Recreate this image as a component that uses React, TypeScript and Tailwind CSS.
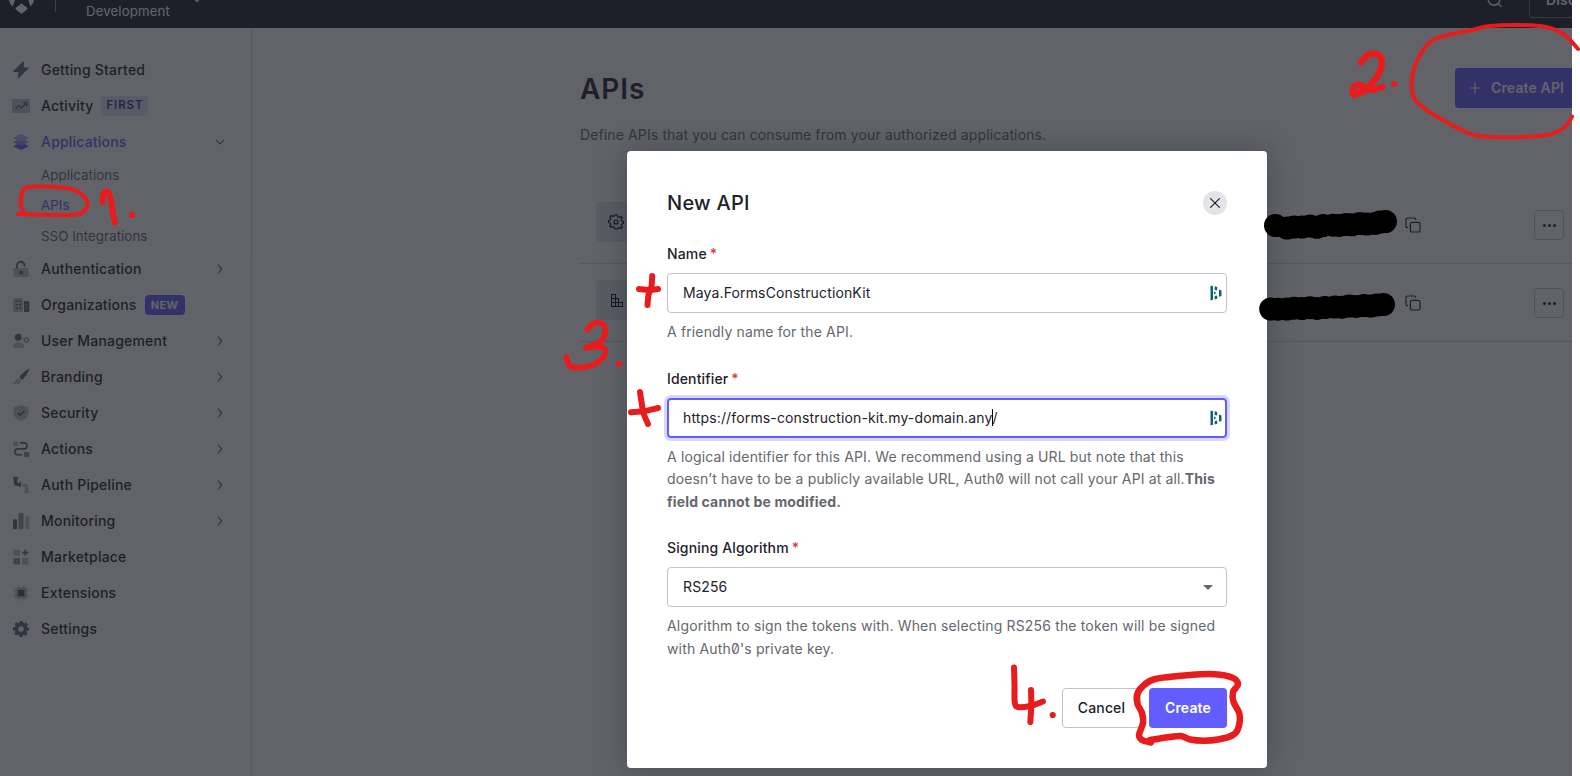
import React from 'react';

type Pt = [number, number];

/** Smooth Catmull-Rom path through a list of points. */
function smooth(pts: Pt[]): string {
  let d = `M${pts[0][0]} ${pts[0][1]}`;
  for (let i = 0; i < pts.length - 1; i++) {
    const a = pts[i - 1] ?? pts[i];
    const b = pts[i];
    const c = pts[i + 1];
    const e = pts[i + 2] ?? c;
    d += ` C${b[0] + (c[0] - a[0]) / 6} ${b[1] + (c[1] - a[1]) / 6} ${c[0] - (e[0] - b[0]) / 6} ${c[1] - (e[1] - b[1]) / 6} ${c[0]} ${c[1]}`;
  }
  return d;
}

const D = '#5f6577';
const M = '#8f939e';
const L = '#c0c2c8';

const icons: Record<string, React.ReactNode> = {
  bolt: <path d="M9.300 .300.600 8.700c-.7.700-.4 1.400.5 1.400h4.500L4.700 15c-.2 1 .5 1.400 1.200.7l9.400-9c.6-.6.300-1.200-.5-1.200h-4.200L11.200 1C11.300-.100 10.300-.600 9.300.300Z" fill={D} />,
  activity: (
    <>
      <rect x="-1" y="1" width="18" height="14" rx="1.600" fill={L} />
      <path d="m2.500 11 3.500-3.400 2.600 2.200L13.400 5M9.800 4.700h3.900v3.900" fill="none" stroke={D} strokeWidth="1.300" />
    </>
  ),
  layers: (
    <>
      <path d="M8 8.600 0 12.200l6.800 3.400q1.200.6 2.400 0L16 12.200Z" fill="#635dff" />
      <path d="M8 4.400 0 8l6.800 3.600q1.200.6 2.400 0L16 8Z" fill="#8f8bff" />
      <path d="M6.800.2q1.200-.5 2.400 0L16 3.900 9.200 7.300q-1.200.6-2.400 0L0 3.900Z" fill="#b5b2f5" />
    </>
  ),
  lock: (
    <>
      <path d="M4 8V4.600a3.800 3.800 0 0 1 7.600 0V5.600" fill="none" stroke={D} strokeWidth="1.900" />
      <rect x=".6" y="7" width="15" height="9" rx="1.600" fill={L} />
      <circle cx="8" cy="11.600" r="2" fill={D} />
    </>
  ),
  org: (
    <>
      <rect x="0" y="1" width="10" height="14" rx="1.500" fill={L} />
      <path d="M2.500 4.300h2M6 4.300h2M2.500 7.800h2M6 7.800h2M2.500 11.300h2M6 11.300h2" stroke={D} strokeWidth="1.500" />
      <path d="M11 4h4q1.300 0 1.300 1.300v8.400q0 1.300-1.300 1.300h-4Z" fill={D} />
      <path d="M12.700 7.500h1.500M12.700 11.300h1.500" stroke={L} strokeWidth="1.500" />
    </>
  ),
  user: (
    <>
      <circle cx="5.200" cy="4.200" r="3.500" fill={D} />
      <path d="M0 15v-1.500c0-2.500 1.500-4 3.800-4h3.400c2.300 0 3.800 1.500 3.800 4V15Z" fill={L} />
      <circle cx="13.300" cy="6.800" r="2" fill="none" stroke={M} strokeWidth="1.300" />
      <path d="M13.300 3.700v1M13.300 9v1M10.600 5.300l.8.400M15.200 7.900l.8.400M10.600 8.300l.8-.4M15.200 5.700l.8-.4" stroke={M} strokeWidth="1.200" />
    </>
  ),
  brush: (
    <>
      <path d="M16.400-.2C13 .600 7.500 6.400 6.300 8.600L9 11C11.500 9 15.800 3.200 16.400-.2Z" fill={D} />
      <path d="M5.300 9.400c-3 0-2.500 4-5.300 5.400 1.500 1 7.400 1.800 8.300-2.700Z" fill={L} />
    </>
  ),
  shield: (
    <>
      <path d="M8 0 .6 2.600v5C.6 12 4 15 8 16c4-1 7.400-4 7.400-8.400v-5Z" fill={L} />
      <path d="m4.800 7.800 2.400 2.500 4.400-4.700" fill="none" stroke={D} strokeWidth="1.700" />
    </>
  ),
  actions: (
    <>
      <rect x="0" y=".200" width="5" height="5" rx=".7" fill={L} />
      <rect x="11" y="11" width="5.300" height="5" rx=".7" fill={M} />
      <path d="M7 1.900h4a3 3 0 0 1 0 6H4.700a2.900 2.900 0 0 0 0 5.900H9" fill="none" stroke={D} strokeWidth="1.600" />
    </>
  ),
  pipe: (
    <>
      <path d="M0 0h5v1.600h-.6v3.100c0 .8.4 1.200 1.200 1.200h1V5H8v5H6.600V9H4.500C2 9 .8 7.500.8 5.500V1.600H0Z" fill={D} />
      <path d="M9.300 6.500h2.200c2.800 0 3.700 1.500 3.700 3.700v4.200h1.200V16h-5.200v-1.600h.8v-3.700c0-.8-.4-1.200-1.200-1.200H9.300Z" fill={L} />
    </>
  ),
  bars: (
    <>
      <rect x="0" y="6.200" width="4" height="10" rx="1.200" fill={D} />
      <rect x="5.500" y="0" width="5" height="16.200" rx="1.200" fill={M} />
      <rect x="12.300" y="3" width="4" height="13.200" rx="1.200" fill={L} />
    </>
  ),
  market: (
    <>
      <rect x=".5" y=".800" width="6.500" height="6.200" rx="1.200" fill={L} />
      <rect x=".5" y="9" width="6.500" height="6.500" rx="1.200" fill={M} />
      <rect x="9" y="9" width="6.500" height="6.500" rx="1.200" fill={L} />
      <path d="M12.300.5v6.200M9.200 3.600h6.200" stroke={D} strokeWidth="1.600" />
    </>
  ),
  chip: (
    <>
      <path d="M5.500 0v16M10.700 0v16M0 5.400h16.500M0 10.600h16.500" stroke={L} strokeWidth="1" />
      <rect x="2.200" y="2.200" width="11.800" height="11.600" rx="1.500" fill={L} />
      <rect x="4.800" y="4.700" width="6.600" height="6.600" rx=".6" fill="#4f5068" />
    </>
  ),
  gear: (
    <>
      <circle cx="8" cy="8" r="4.600" fill="none" stroke={D} strokeWidth="3.600" />
      <circle cx="8" cy="8" r="6.800" fill="none" stroke={D} strokeWidth="2.600" strokeDasharray="3.100 2.240" strokeDashoffset="1.550" />
    </>
  ),
};

function Chevron({ down = false }: { down?: boolean }) {
  return (
    <svg viewBox="0 0 10 10" className="h-2.5 w-2.5 shrink-0" fill="none" stroke="#65676e" strokeWidth="1.100" strokeLinecap="round" strokeLinejoin="round">
      <path d={down ? 'M1.200 3.200 5 6.800 8.800 3.200' : 'M3.200 1.200 6.800 5 3.200 8.800'} />
    </svg>
  );
}

type Item = { icon: string; label: string; badge?: 'FIRST' | 'NEW'; arrow?: boolean; active?: boolean };

function NavItem({ icon, label, badge, arrow, active }: Item) {
  return (
    <div className="flex h-9 items-center pr-[26px] pl-[13px]">
      <svg viewBox="0 0 16 16" className="h-4 w-4 shrink-0 overflow-visible">{icons[icon]}</svg>
      <span className={active ? 'ml-3 pb-0.5 font-medium text-[#635dff]' : 'ml-3 pb-0.5 font-medium text-[#1e212a]'}>{label}</span>
      {badge === 'FIRST' && (
        <span className="ml-2 flex h-5 w-[47px] items-center justify-center rounded bg-[#e2e5f4] text-[11.500px] font-semibold tracking-[0.9px] text-[#32348c]">FIRST</span>
      )}
      {badge === 'NEW' && (
        <span className="ml-2 flex h-5 w-10 items-center justify-center rounded bg-[#635dff] text-[11px] font-bold tracking-[0.4px] text-white">NEW</span>
      )}
      {arrow && <span className="ml-auto flex"><Chevron down={active} /></span>}
    </div>
  );
}

const lower: Item[] = [
  { icon: 'lock', label: 'Authentication', arrow: true },
  { icon: 'org', label: 'Organizations', badge: 'NEW' },
  { icon: 'user', label: 'User Management', arrow: true },
  { icon: 'brush', label: 'Branding', arrow: true },
  { icon: 'shield', label: 'Security', arrow: true },
  { icon: 'actions', label: 'Actions', arrow: true },
  { icon: 'pipe', label: 'Auth Pipeline', arrow: true },
  { icon: 'bars', label: 'Monitoring', arrow: true },
  { icon: 'market', label: 'Marketplace' },
  { icon: 'chip', label: 'Extensions' },
  { icon: 'gear', label: 'Settings' },
];

function Header() {
  return (
    <header className="flex h-7 shrink-0 items-start overflow-hidden bg-[#1e212a] text-white">
      <svg viewBox="0 0 26 14" className="ml-[9px] h-[14px] w-[26px] shrink-0">
        <path d="M0 0H6L3.800 6.300C1.500 4.500.4 2.500 0 0ZM19.400 0h5.600c-.4 2.500-1.500 4.500-3.800 6.300ZM12.500 3.600 18.800 8.300c-1.500 2.300-4 4-6.300 5.400C10.200 12.300 7.700 10.600 6.200 8.300Z" fill="white" />
      </svg>
      <div className="ml-5 h-3 w-px shrink-0 bg-[#84868c]" />
      <span className="ml-[30px] text-[13.200px] leading-[22px]">Development</span>
      <svg viewBox="0 0 10 4" className="ml-[22px] h-1 w-2.5" fill="none" stroke="white" strokeWidth="1.300"><path d="M1.500-2 5 1.500 8.500-2" /></svg>
      <svg viewBox="0 0 16 8" className="ml-auto h-2 w-4 shrink-0" fill="none" stroke="white" strokeWidth="1.400"><circle cx="7" cy="-.5" r="5.800" /><path d="m11 3.500 3.400 3.200" /></svg>
      <div className="-mt-5 ml-[26px] h-[38px] w-[43px] shrink-0 overflow-hidden rounded-bl border-b border-l border-[#74767c] pt-[8px] pl-4 text-sm leading-6 font-semibold whitespace-nowrap">
        Disc
      </div>
    </header>
  );
}

function Row({ kind }: { kind: 'system' | 'custom' }) {
  return (
    <div className="flex h-[78px] items-start border-b border-[#d6d7dc] pt-4 pr-2 pl-4">
      <div className="flex h-10 w-10 items-center justify-center rounded bg-[#e3e6ec]">
        {kind === 'system' ? (
          <svg viewBox="0 0 16 16" className="h-4 w-4" fill="none" stroke="#000" strokeWidth="1.150" strokeLinejoin="round">
            <path d="M6.900 1h2.200l.5 1.800 1.400.6 1.700-1 1.500 1.600-1 1.600.6 1.400 1.700.5v2l-1.700.5-.6 1.400 1 1.700-1.500 1.500-1.700-1-1.400.6L9.100 15H6.900l-.5-1.800-1.400-.6-1.700 1-1.500-1.500 1-1.700L2.200 9 .500 8.500v-2L2.200 6l.6-1.400-1-1.600 1.500-1.600 1.700 1 1.400-.6Z" />
            <circle cx="8" cy="8" r="2" />
          </svg>
        ) : (
          <svg viewBox="0 0 13 13" className="h-[13px] w-[13px]" fill="none" stroke="#000" strokeWidth="1" shapeRendering="crispEdges">
            <path d="M1.500 .5H5.500V4.500H8.500V8.500H12.500V12.500H1.500ZM1.500 4.500H5.500V12.500M1.500 8.500H8.500V12.500" />
          </svg>
        )}
      </div>
      <svg viewBox="0 0 16 16" className="mt-[15px] ml-auto h-4 w-4" fill="none" stroke="#1e212a" strokeWidth="1.200">
        <rect x="5.400" y="5.400" width="9.600" height="9.600" rx="1.600" />
        <path d="M3 10.600H2.200Q1 10.600 1 9.400V2.200Q1 1 2.200 1H9.400Q10.600 1 10.600 2.200V3" />
      </svg>
      <div className="mt-2 ml-[113px] flex h-[30px] w-[30px] items-center justify-center gap-0.5 rounded border border-[#c4c6cc]">
        <i className="h-[3px] w-[3px] rounded-full bg-[#1e212a]" />
        <i className="h-[3px] w-[3px] rounded-full bg-[#1e212a]" />
        <i className="h-[3px] w-[3px] rounded-full bg-[#1e212a]" />
      </div>
    </div>
  );
}

function Label({ children }: { children: React.ReactNode }) {
  return (
    <div className="h-[22px] leading-[22px] font-medium text-[#1e212a]">
      {children} <span className="-ml-px text-[#d03c38]">*</span>
    </div>
  );
}

function VaultIcon() {
  return (
    <svg viewBox="0 0 12 16" className="h-4 w-3 shrink-0" fill="#0e6272">
      <path d="M.500 .600 3 1.200V14.800L.500 15.400ZM4.700 1.300 7.200 2V5.400L4.700 5ZM4.700 11 7.200 10.500V13.800L4.700 14.600ZM9 4.600 11.500 5.500V11L9 11.800ZM4 6.800H5.500V9H4Z" />
    </svg>
  );
}

function Modal() {
  return (
    <div className="flex h-[617px] w-[640px] flex-col rounded bg-white px-10 text-[14px] tracking-[0.14px] text-[#65676e] shadow-[0_0_30px_rgba(30,33,42,0.35)]">
      <div className="mt-9 flex h-8 items-center justify-between">
        <h2 className="text-[20px] font-medium tracking-[0.25px] text-[#1e212a]">New API</h2>
        <span className="flex h-6 w-6 items-center justify-center rounded-full bg-[#e3e4e6]">
          <svg viewBox="0 0 10 10" className="h-2.5 w-2.5" stroke="#1e212a" strokeWidth="1.200" strokeLinecap="round"><path d="m.6.600 8.800 8.800M9.400.600.600 9.400" /></svg>
        </span>
      </div>
      <div className="mt-6 pb-2"><Label>Name</Label></div>
      <div className="flex h-10 shrink-0 items-center justify-between rounded border border-[#c2c4c9] pr-1 pl-[15px] text-[#1e212a]">
        <span className="pb-px">Maya.FormsConstructionKit</span><VaultIcon />
      </div>
      <p className="mt-2 leading-[22.500px]">A friendly name for the API.</p>
      <div className="mt-[24.500px] pb-2"><Label>Identifier</Label></div>
      <div className="flex h-10 shrink-0 items-center justify-between rounded border-2 border-[#635dff] pr-[3px] pl-[14px] text-[#1e212a] shadow-[0_0_0_3px_#d8d6ff]">
        <span className="flex items-center pb-px">https://forms-construction-kit.my-domain.any<i className="-mr-px h-[17px] w-px bg-black" />/</span><VaultIcon />
      </div>
      <p className="mt-2 leading-[22.400px] slashed-zero">
        A logical identifier for this API. We recommend using a URL but note that this<br />
        doesn’t have to be a publicly available URL, Auth0 will not call your API at all.<b>This<br />field cannot be modified.</b>
      </p>
      <div className="mt-[23.800px] pb-2"><Label>Signing Algorithm</Label></div>
      <div className="flex h-10 shrink-0 items-center justify-between rounded border border-[#c2c4c9] pr-[13px] pl-[15px] text-[#1e212a]">
        <span className="pb-px">RS256</span>
        <svg viewBox="0 0 10 5" className="h-[5px] w-2.5" fill="#65676e"><path d="M0 0H10L5 5Z" /></svg>
      </div>
      <p className="mt-2 leading-[22.500px] tracking-[0.165px] slashed-zero">
        Algorithm to sign the tokens with. When selecting RS256 the token will be signed<br />with Auth0's private key.
      </p>
      <div className="mt-auto mb-10 flex h-10 shrink-0 justify-end gap-2">
        <button className="w-[79px] rounded border border-[#c2c4c9] pb-0.5 font-medium text-[#1e212a]">Cancel</button>
        <button className="w-[78px] rounded bg-[#635dff] pb-0.5 font-semibold text-white">Create</button>
      </div>
    </div>
  );
}

const redStrokes: { w: number; pts: Pt[] }[] = [
  { w: 4, pts: [[23.5, 211], [20.7, 205], [22.5, 192], [27, 187.200], [45, 186.500], [66, 188], [77, 191], [85, 197.500], [87.500, 205], [83, 212], [72, 215], [50, 215], [17.500, 214]] },
  { w: 6, pts: [[102.5, 202], [103.5, 194], [107.500, 191.500], [111, 200], [113, 214], [115, 222.500]] },
  { w: 6.5, pts: [[1361, 62.500], [1367, 55.500], [1376, 54], [1381.500, 59], [1380.500, 70], [1373, 82], [1364, 91], [1356, 94], [1353.500, 94.500], [1353, 89], [1358, 84.500], [1365, 87.500], [1372, 89.500], [1382.500, 87]] },
  { w: 4, pts: [[1578, 49], [1571, 41], [1561, 32.500], [1546, 27], [1520, 25], [1490, 26], [1472, 30], [1444, 36], [1429, 43], [1416, 63], [1412, 79], [1412.500, 94], [1418, 103], [1436, 116], [1466, 132], [1484, 136.500], [1520, 137], [1546, 135], [1558, 131.500], [1567, 125], [1572, 116.500]] },
  { w: 5.8, pts: [[587.500, 329.500], [592, 324.500], [599, 322.500], [604.500, 327], [604.500, 336], [598, 343], [586, 348]] },
  { w: 5.8, pts: [[586, 348], [597, 346.500], [604.500, 349], [603.500, 357], [594, 364.500], [582, 367.500], [570, 366], [566.500, 357]] },
  { w: 6, pts: [[639, 289], [649, 290], [658, 289]] },
  { w: 6, pts: [[652.200, 276], [651.500, 286], [648.500, 295], [647.500, 305]] },
  { w: 6, pts: [[631, 412.300], [645, 411], [658, 408]] },
  { w: 6, pts: [[640, 392], [641.500, 402], [643.500, 413], [648, 424]] },
  { w: 6, pts: [[1014, 667.500], [1014.500, 685], [1014.700, 702], [1018, 707], [1030, 706], [1043, 701.500]] },
  { w: 6, pts: [[1031, 690], [1031.300, 705], [1030.300, 722]] },
  { w: 6.5, pts: [[1151, 742.500], [1142, 740], [1139, 735], [1143, 723], [1142, 713], [1137.500, 704], [1137, 695], [1142, 687], [1155, 679], [1190, 675], [1215, 674.200], [1232, 677.500], [1238, 684], [1233, 692], [1233.500, 702], [1239.500, 714], [1238, 729], [1232, 735.500], [1218, 739.500], [1204, 740.700], [1190, 739.500], [1181, 736], [1168, 737.300], [1150, 740]] },
];

/** Redaction marks: overlapping round dabs along each line. */
const dabs: Pt[] = [
  [1275.5, 225.5], [1287, 228], [1294, 227], [1302, 227], [1310, 226], [1317, 227.3], [1323, 225.5], [1333, 225.2], [1339, 225.4], [1346, 224.6], [1352, 224.8], [1360, 223.6], [1367, 224], [1375, 223.400], [1380, 222], [1385.5, 221.5],
  [1270.7, 309], [1278, 309.2], [1287, 309], [1294, 308.2], [1302, 308.500], [1310, 307.700], [1317, 308.400], [1325, 307.600], [1335, 307], [1342, 307.200], [1349, 306], [1356, 306.400], [1364, 305.500], [1371, 306], [1377, 305], [1383.500, 304.500],
];

const dots: Pt[] = [[132, 215], [1394.200, 84], [619, 364], [1052.700, 715]];

export default function App() {
  return (
    <div className="relative h-[776px] w-[1580px] overflow-hidden bg-white font-['Inter',sans-serif] text-[14px] tracking-[0.14px] text-[#1e212a]">
      <div className="flex h-full w-[1572px] flex-col bg-white">
        <Header />
        <div className="flex min-h-0 flex-1">
          <aside className="w-[252px] shrink-0 border-r border-[#dcdde1] pt-6 tracking-[0.2px]">
            <NavItem icon="bolt" label="Getting Started" />
            <NavItem icon="activity" label="Activity" badge="FIRST" />
            <NavItem icon="layers" label="Applications" arrow active />
            <div className="flex flex-col pb-0.5 pl-[41px] text-[13.300px] tracking-[0.06px] text-[#65676e]">
              <span className="h-[30px] leading-[30px]">Applications</span>
              <span className="h-[30px] leading-[30px] text-[#635dff]">APIs</span>
              <span className="h-[29px] leading-[32px]">SSO Integrations</span>
            </div>
            {lower.map((item) => <NavItem key={item.label} {...item} />)}
          </aside>
          <main className="flex-1 pl-[328px]">
            <div className="mt-10 flex h-10 items-center justify-between">
              <h1 className="pt-0.5 text-[28px] font-semibold tracking-[0.9px]">APIs</h1>
              <button className="flex h-10 w-[117px] items-center rounded-l bg-[#635dff] pb-px pl-[14px] font-semibold text-white">
                <svg viewBox="0 0 12 12" className="mr-[10px] h-3 w-3" stroke="white" strokeWidth="1.200"><path d="M6 .5v11M.5 6h11" /></svg>
                Create API
              </button>
            </div>
            <p className="mt-[15px] leading-6 tracking-[0.125px] text-[#65676e]">Define APIs that you can consume from your authorized applications.</p>
            <div className="mt-[39px]">
              <Row kind="system" />
              <Row kind="custom" />
            </div>
          </main>
        </div>
      </div>
      <div className="absolute inset-y-0 left-0 flex w-[1572px] items-start bg-[#1e212a]/70 pt-[151px] pl-[627px]">
        <Modal />
      </div>
      <svg viewBox="0 0 1580 776" className="pointer-events-none absolute inset-0 h-[776px] w-[1580px]" fill="none" strokeLinecap="round" strokeLinejoin="round">
        {dabs.map(([x, y]) => <circle key={`${x}-${y}`} cx={x} cy={y} r="11.500" fill="#000" />)}
        {redStrokes.map((s, i) => <path key={i} d={smooth(s.pts)} stroke="#e81c1c" strokeWidth={s.w} />)}
        {dots.map(([x, y]) => <circle key={x} cx={x} cy={y} r="3.100" fill="#e81c1c" />)}
      </svg>
    </div>
  );
}
